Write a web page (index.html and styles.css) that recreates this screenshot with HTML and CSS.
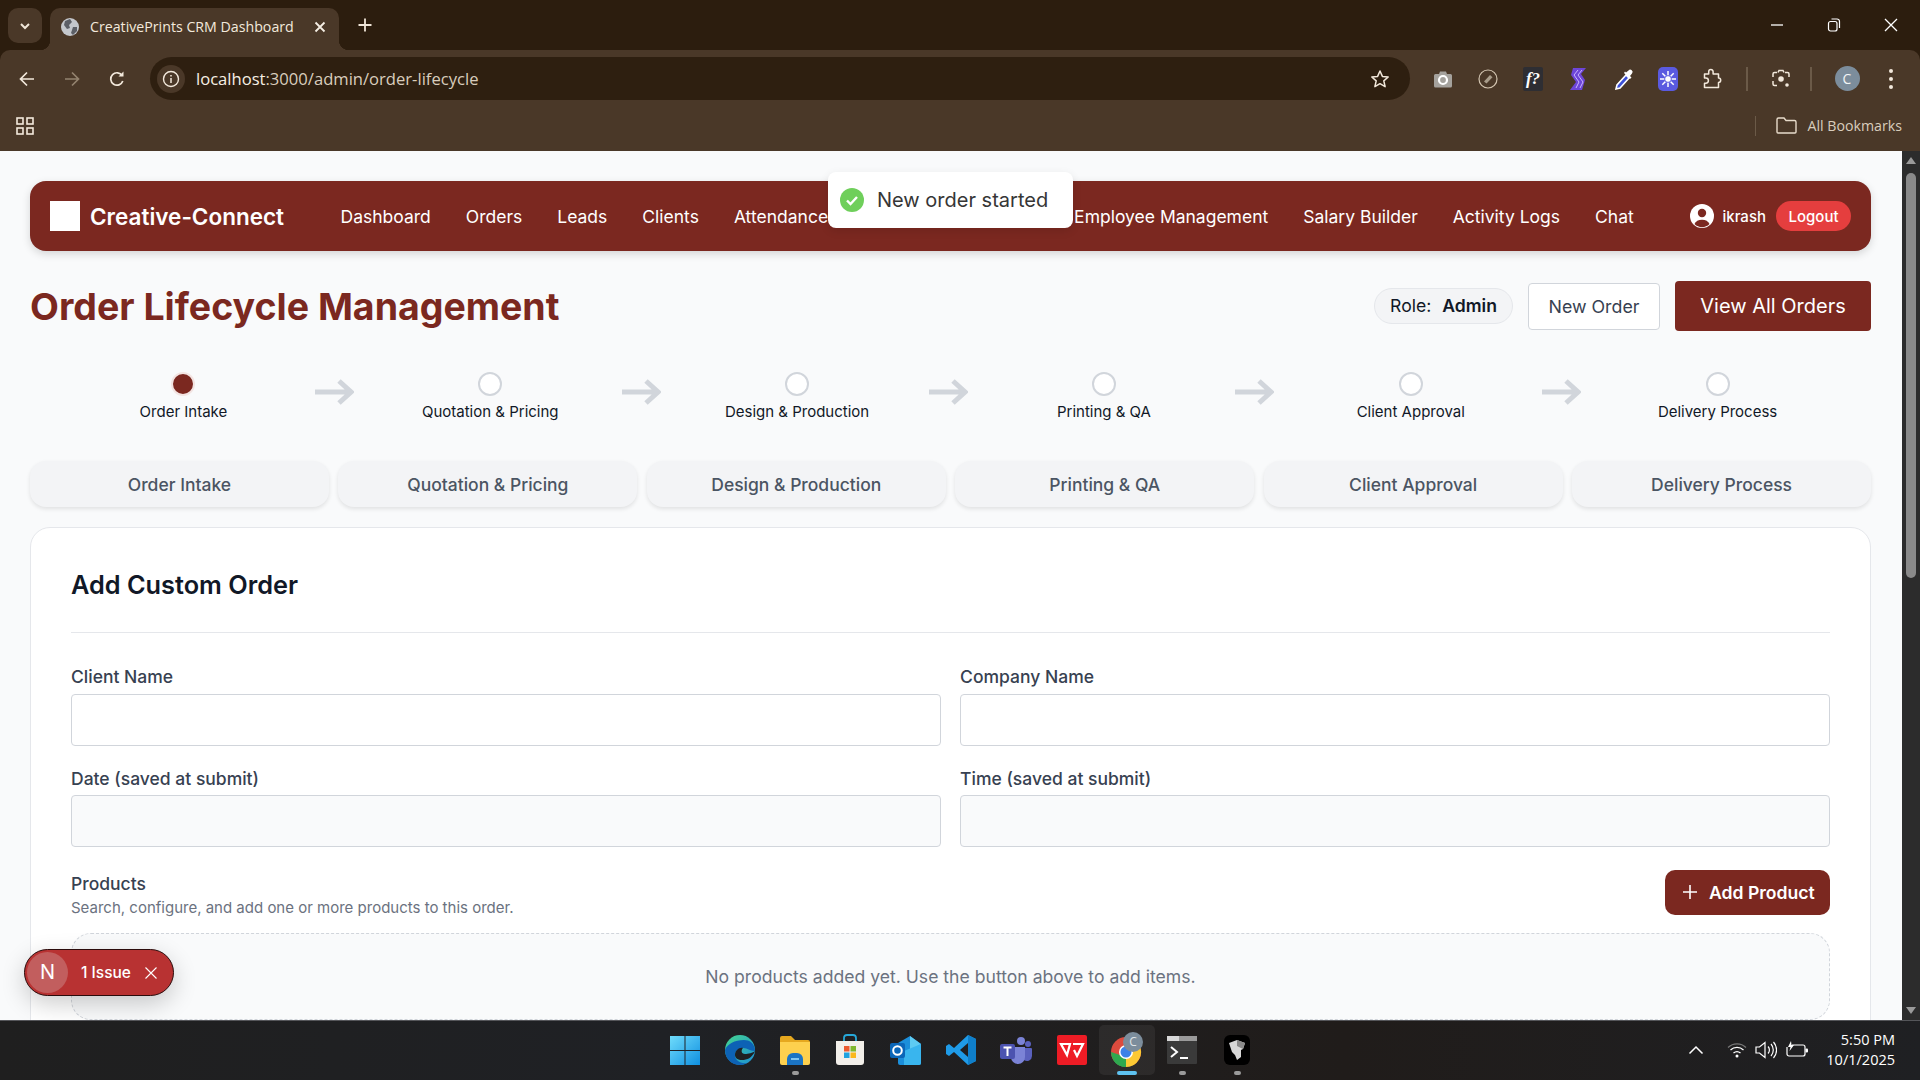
FILE: index.html
```html
<!DOCTYPE html>
<html lang="en">
<head>
  <meta charset="UTF-8" />
  <title>CreativePrints CRM Dashboard</title>
  <link rel="stylesheet" href="styles.css">
</head>
<body>

<!-- Browser chrome -->
<header class="browser">
  <div class="tabstrip">
    <div class="tab-search">
      <svg width="14" height="14" viewBox="0 0 14 14"><path d="M3 5l4 4 4-4" fill="none" stroke="#f0e6d8" stroke-width="2"/></svg>
    </div>
    <div class="tab">
      <svg class="tab-globe" width="18" height="18" viewBox="0 0 18 18"><circle cx="9" cy="9" r="9" fill="#c4c7cc"/><path d="M4 3l5-2 2 3-3 3 1 3-3 1-3-4zM12 9l4 0 0 4-4 4-2-2z" fill="#5c5f66"/></svg>
      <span class="tab-title">CreativePrints CRM Dashboard</span>
      <svg class="tab-close" width="12" height="12" viewBox="0 0 12 12"><path d="M1.5 1.5l9 9M10.500 1.500l-9 9" stroke="#f5eee4" stroke-width="1.800"/></svg>
    </div>
    <svg class="tab-new" width="16" height="16" viewBox="0 0 16 16"><path d="M8 1.500v13M1.500 8h13" stroke="#f0e6d8" stroke-width="1.800"/></svg>
    <div class="win-controls">
      <svg width="14" height="14" viewBox="0 0 14 14"><path d="M1 7h12" stroke="#fff" stroke-width="1.300"/></svg>
      <svg width="14" height="14" viewBox="0 0 14 14"><rect x="1.500" y="3.500" width="8.500" height="9.500" rx="2" fill="none" stroke="#fff" stroke-width="1.200"/><path d="M4.500 1h5.500a2.500 2.500 0 0 1 2.500 2.500v6.500" fill="none" stroke="#fff" stroke-width="1.200"/></svg>
      <svg width="14" height="14" viewBox="0 0 14 14"><path d="M1 1l12 12M13 1L1 13" stroke="#fff" stroke-width="1.300"/></svg>
    </div>
  </div>

  <div class="toolbar">
    <div class="tool-slot">
      <svg width="18" height="18" viewBox="0 0 18 18"><path d="M16 9H3M9 2.500L2.500 9 9 15.500" fill="none" stroke="#f3e9dc" stroke-width="1.700"/></svg>
    </div>
    <div class="tool-slot">
      <svg width="18" height="18" viewBox="0 0 18 18"><path d="M2 9h13M9 2.500L15.500 9 9 15.500" fill="none" stroke="#93836f" stroke-width="1.700"/></svg>
    </div>
    <div class="tool-slot">
      <svg width="18" height="18" viewBox="0 0 18 18"><path d="M14.800 11a6.200 6.200 0 1 1-.6-5.300" fill="none" stroke="#f3e9dc" stroke-width="1.700"/><path d="M15.500 1.500v5h-5z" fill="#f3e9dc"/></svg>
    </div>
    <div class="omnibox">
      <span class="omni-info">
        <svg width="18" height="18" viewBox="0 0 18 18"><circle cx="9" cy="9" r="7.500" fill="none" stroke="#f3e9dc" stroke-width="1.400"/><path d="M9 8v5M9 5v1.600" stroke="#f3e9dc" stroke-width="1.500"/></svg>
      </span>
      <span class="omni-url">localhost<span class="omni-path">:3000/admin/order-lifecycle</span></span>
      <svg class="omni-star" width="20" height="20" viewBox="0 0 20 20"><path d="M10 2l2.400 5.400 5.800.6-4.400 3.900 1.300 5.800L10 14.700l-5.100 3 1.300-5.800L1.800 8l5.800-.6z" fill="none" stroke="#f3e9dc" stroke-width="1.500" stroke-linejoin="round"/></svg>
    </div>
    <div class="extensions">
      <div class="tool-slot">
        <svg width="20" height="20" viewBox="0 0 20 20"><path d="M1 6.500a1.500 1.500 0 0 1 1.500-1.500H6l1-2.500h6l1 2.500h3.500A1.500 1.500 0 0 1 19 6.500V17a1.500 1.500 0 0 1-1.500 1.500h-15A1.500 1.500 0 0 1 1 17z" fill="#a5a29d"/><circle cx="10" cy="11" r="4" fill="none" stroke="#fff" stroke-width="2.200"/></svg>
      </div>
      <div class="tool-slot">
        <svg width="20" height="20" viewBox="0 0 20 20"><circle cx="10" cy="10" r="9" fill="none" stroke="#d2c4b0" stroke-width="1.200"/><path d="M6 12.500l6-6.500 2.500 2.200-6 6.300z" fill="#a89c8a"/></svg>
      </div>
      <div class="tool-slot">
        <div class="ext-formula">f?</div>
      </div>
      <div class="tool-slot">
        <svg width="18" height="24" viewBox="0 0 18 24"><path d="M4 1h13l-5 6 4 6-3 10H1l6-8-5-7z" fill="#6d45d8"/><path d="M9 3L5 8l5 7-3 6M13 3L9 8l5 7-3 6" fill="none" stroke="#c9b4ff" stroke-width="1"/></svg>
      </div>
      <div class="tool-slot">
        <svg width="22" height="24" viewBox="0 0 22 24"><path d="M14 8L5 18l-1 4 4-1 9-10z" fill="#3c50d8" stroke="#fff" stroke-width="1.600"/><path d="M12 6l6 6 1.500-1.500-1.500-1.500 2-2.500a2.200 2.200 0 0 0-3.500-3l-2.500 2-1-1z" fill="#fff"/></svg>
      </div>
      <div class="tool-slot">
        <div class="ext-blue">
          <svg width="16" height="16" viewBox="0 0 16 16"><g stroke="#fff" stroke-width="1.500"><path d="M8 0v16M0 8h16M2.300 2.300l11.400 11.400M13.700 2.300L2.300 13.700"/></g><circle cx="8" cy="8" r="3.400" fill="#fff" stroke="#5a5ae0"/></svg>
        </div>
      </div>
      <div class="tool-slot">
        <svg width="20" height="21" viewBox="0 0 20 21"><path d="M1.500 6h4.200V3.700a2.200 2.200 0 0 1 4.400 0V6h5.400v4a2.200 2.200 0 0 1 0 4.400v5H1.500v-4.200h1.300a2.600 2.600 0 0 0 0-5.200H1.500z" fill="none" stroke="#f3e9dc" stroke-width="1.500" stroke-linejoin="round"/></svg>
      </div>
      <span class="tool-sep"></span>
      <div class="tool-lens">
        <svg width="20" height="20" viewBox="0 0 20 20"><path d="M6 3.500H3.500A1.500 1.500 0 0 0 2 5v3M14 3.500h2.500A1.500 1.500 0 0 1 18 5v3M2 12v3a1.500 1.500 0 0 0 1.500 1.500H6" fill="none" stroke="#f3e9dc" stroke-width="1.500"/><path d="M7 3.500l1-2h4l1 2" fill="none" stroke="#f3e9dc" stroke-width="1.500"/><circle cx="10" cy="10" r="2.800" fill="#f3e9dc"/><circle cx="16" cy="16" r="1.800" fill="#f3e9dc"/></svg>
      </div>
      <span class="tool-sep tool-sep-2"></span>
      <div class="avatar">C</div>
      <div class="tool-dots"><i></i><i></i><i></i></div>
    </div>
  </div>

  <div class="bookmarks">
    <svg class="apps-icon" width="18" height="18" viewBox="0 0 18 18"><g fill="none" stroke="#f3e9dc" stroke-width="1.600"><rect x="1" y="1" width="6" height="6"/><rect x="11" y="1" width="6" height="6"/><rect x="1" y="11" width="6" height="6"/><rect x="11" y="11" width="6" height="6"/></g></svg>
    <span class="bm-sep"></span>
    <svg width="21" height="17" viewBox="0 0 21 17"><path d="M1 2.500A1.500 1.500 0 0 1 2.500 1H8l2 2.500h8.500A1.500 1.500 0 0 1 20 5v10a1 1 0 0 1-1 1H2a1 1 0 0 1-1-1z" fill="none" stroke="#e8dccb" stroke-width="1.400"/></svg>
    <span class="bm-label">All Bookmarks</span>
  </div>
</header>

<!-- Contenu de la page -->
<div class="viewport">
  <main class="page">
    <nav class="navbar">
      <div class="brand">
        <span class="brand-logo"></span>
        <span class="brand-name">Creative-Connect</span>
      </div>
      <div class="nav-links">
        <a>Dashboard</a>
        <a>Orders</a>
        <a>Leads</a>
        <a>Clients</a>
        <a>Attendance</a>
        <span class="nav-covered"></span>
        <a>Employee Management</a>
        <a>Salary Builder</a>
        <a>Activity Logs</a>
        <a>Chat</a>
      </div>
      <div class="nav-user">
        <svg width="24" height="24" viewBox="0 0 24 24"><circle cx="12" cy="12" r="12" fill="#fff"/><circle cx="12" cy="9" r="4.200" fill="#7b2820"/><path d="M4.500 20a8 6.500 0 0 1 15 0 10.500 10.500 0 0 1-15 0z" fill="#7b2820"/></svg>
        <span class="nav-username">ikrash</span>
        <button class="logout-btn">Logout</button>
      </div>
    </nav>

    <div class="title-row">
      <h1>Order Lifecycle Management</h1>
      <div class="title-actions">
        <span class="role-pill">Role: <b>Admin</b></span>
        <button class="btn-outline">New Order</button>
        <button class="btn-solid">View All Orders</button>
      </div>
    </div>

    <div class="stepper">
      <div class="step active"><span class="step-dot"></span><span>Order Intake</span><svg class="step-arrow" width="40" height="26" viewBox="0 0 40 26"><path d="M1 13h35M25 2l12 11-12 11" fill="none" stroke="#d1d5db" stroke-width="5"/></svg></div>
      <div class="step"><span class="step-dot"></span><span>Quotation &amp; Pricing</span><svg class="step-arrow" width="40" height="26" viewBox="0 0 40 26"><path d="M1 13h35M25 2l12 11-12 11" fill="none" stroke="#d1d5db" stroke-width="5"/></svg></div>
      <div class="step"><span class="step-dot"></span><span>Design &amp; Production</span><svg class="step-arrow" width="40" height="26" viewBox="0 0 40 26"><path d="M1 13h35M25 2l12 11-12 11" fill="none" stroke="#d1d5db" stroke-width="5"/></svg></div>
      <div class="step"><span class="step-dot"></span><span>Printing &amp; QA</span><svg class="step-arrow" width="40" height="26" viewBox="0 0 40 26"><path d="M1 13h35M25 2l12 11-12 11" fill="none" stroke="#d1d5db" stroke-width="5"/></svg></div>
      <div class="step"><span class="step-dot"></span><span>Client Approval</span><svg class="step-arrow" width="40" height="26" viewBox="0 0 40 26"><path d="M1 13h35M25 2l12 11-12 11" fill="none" stroke="#d1d5db" stroke-width="5"/></svg></div>
      <div class="step"><span class="step-dot"></span><span>Delivery Process</span></div>
    </div>

    <div class="tabs">
      <button>Order Intake</button>
      <button>Quotation &amp; Pricing</button>
      <button>Design &amp; Production</button>
      <button>Printing &amp; QA</button>
      <button>Client Approval</button>
      <button>Delivery Process</button>
    </div>

    <section class="card">
      <h2>Add Custom Order</h2>
      <div class="form-grid">
        <div class="field">
          <label>Client Name</label>
          <input type="text" />
        </div>
        <div class="field">
          <label>Company Name</label>
          <input type="text" />
        </div>
        <div class="field">
          <label>Date (saved at submit)</label>
          <input class="readonly" type="text" readonly />
        </div>
        <div class="field">
          <label>Time (saved at submit)</label>
          <input class="readonly" type="text" readonly />
        </div>
      </div>
      <div class="products-head">
        <div class="products-text">
          <div class="products-title">Products</div>
          <div class="products-sub">Search, configure, and add one or more products to this order.</div>
        </div>
        <button class="add-product">
          <svg width="16" height="16" viewBox="0 0 16 16"><path d="M8 1v14M1 8h14" stroke="#fff" stroke-width="1.600"/></svg>
          Add Product
        </button>
      </div>
      <div class="products-empty">No products added yet. Use the button above to add items.</div>
    </section>
  </main>

  <div class="scrollbar">
    <i class="sb-up"></i>
    <div class="sb-track"><div class="sb-thumb"></div></div>
    <i class="sb-down"></i>
  </div>

  <!-- Toast et badge par-dessus la page -->
  <div class="toast">
    <svg width="24" height="24" viewBox="0 0 24 24"><circle cx="12" cy="12" r="12" fill="#6fcf5b"/><path d="M7 12.500l3.500 3.500L17 9" fill="none" stroke="#fff" stroke-width="2.400"/></svg>
    <span>New order started</span>
  </div>
  <div class="issue-badge">
    <span class="issue-n">N</span>
    <span class="issue-text">1 Issue</span>
    <svg width="12" height="12" viewBox="0 0 12 12"><path d="M.5.500l11 11M11.500.500l-11 11" stroke="#fff" stroke-width="1.100"/></svg>
  </div>
</div>

<!-- Barre des taches -->
<footer class="taskbar">
  <div class="task-spacer"></div>
  <div class="task-icons">
    <div class="task-icon">
      <svg width="30" height="30" viewBox="0 0 30 30"><defs><linearGradient id="win" x1="0" y1="0" x2="1" y2="1"><stop offset="0" stop-color="#6fdcfb"/><stop offset="1" stop-color="#0f8fe0"/></linearGradient></defs><path d="M0 1h14.500v14H0zM15.500 1H30v14H15.500zM0 16h14.500v14H0zM15.500 16H30v14H15.500z" fill="url(#win)"/></svg>
    </div>
    <div class="task-icon">
      <svg width="30" height="30" viewBox="0 0 30 30"><defs><linearGradient id="edge" x1="0" y1="0" x2="1" y2="1"><stop offset="0" stop-color="#45d68f"/><stop offset="1" stop-color="#1c8fd8"/></linearGradient></defs><circle cx="15" cy="15" r="15" fill="url(#edge)"/><path d="M30 16c0-8-6-11-11-11C10 5 2 9 0 15c0 9 7 15 15 15 3 0 5-1 7-2-7 1-12-3-12-8 0-4 4-7 8-7 5 0 6 3 12 3z" fill="#0d62b5"/><path d="M10 20c0 3 3 5 7 5 5 0 10-2 13-9-2 2-7 3-10 3-4 0-4-4-2-6-4-1-8 3-8 7z" fill="#1f2023"/></svg>
    </div>
    <div class="task-icon has-dot">
      <svg width="32" height="30" viewBox="0 0 32 30"><path d="M1 3a2 2 0 0 1 2-2h9l4 4h13a2 2 0 0 1 2 2v3H1z" fill="#e6a81f"/><path d="M1 7h30v21a2 2 0 0 1-2 2H3a2 2 0 0 1-2-2z" fill="#fdd04e"/><path d="M8 24a6 6 0 0 1 6-6h4a6 6 0 0 1 6 6v6H8z" fill="#1b74c4"/><rect x="12" y="23" width="8" height="2" fill="#7fc4f0"/></svg>
    </div>
    <div class="task-icon">
      <svg width="30" height="32" viewBox="0 0 30 32"><path d="M9 8V4a3 3 0 0 1 3-3h6a3 3 0 0 1 3 3v4" fill="none" stroke="#26a7d8" stroke-width="1.800"/><path d="M1 7h28v21a3 3 0 0 1-3 3H4a3 3 0 0 1-3-3z" fill="#f2efea"/><rect x="9" y="12" width="5.500" height="5.500" fill="#ea5a30"/><rect x="15.500" y="12" width="5.500" height="5.500" fill="#7fb72e"/><rect x="9" y="18.500" width="5.500" height="5.500" fill="#1fa2e0"/><rect x="15.500" y="18.500" width="5.500" height="5.500" fill="#fbb81d"/></svg>
    </div>
    <div class="task-icon">
      <svg width="32" height="30" viewBox="0 0 32 30"><path d="M8 8l12-7 11 8v19a2 2 0 0 1-2 2H10a2 2 0 0 1-2-2z" fill="#1b8fdb"/><path d="M20 1l11 8-11 7z" fill="#5ecbf2"/><path d="M14 16l17-7v19a2 2 0 0 1-2 2H14z" fill="#39b5ee"/><rect x="0" y="8" width="15" height="15" rx="2" fill="#0b66b8"/><circle cx="7.500" cy="15.500" r="4.300" fill="none" stroke="#fff" stroke-width="2"/></svg>
    </div>
    <div class="task-icon">
      <svg width="30" height="32" viewBox="0 0 30 32"><path d="M22 1l8 4v22l-8 4L8 18l-5 4-3-2v-8l3-2 5 4z" fill="#1f9be8"/><path d="M22 1l8 4v22l-8 4z" fill="#0f7fca"/><path d="M22 9l-8 7 8 7z" fill="#1f2023"/></svg>
    </div>
    <div class="task-icon">
      <svg width="32" height="28" viewBox="0 0 32 28"><circle cx="21" cy="5" r="4" fill="#7b83d6"/><circle cx="28" cy="8" r="3" fill="#5a61bd"/><path d="M24 12h7a1 1 0 0 1 1 1v7a5 5 0 0 1-8 4z" fill="#5a61bd"/><path d="M11 11h14v10a7 7 0 0 1-14 0z" fill="#7b83d6"/><rect x="0" y="8" width="15" height="15" rx="2" fill="#4c53b0"/><path d="M3.500 11.500h8M7.500 11.500v8.500" stroke="#fff" stroke-width="2"/></svg>
    </div>
    <div class="task-icon">
      <svg width="30" height="30" viewBox="0 0 30 30"><rect width="30" height="30" rx="2" fill="#ee1c25"/><path d="M4 9h9l-3 11zM16 9h10l-6 12-3-6" fill="none" stroke="#fff" stroke-width="2.200"/></svg>
    </div>
    <div class="task-icon task-active">
      <svg width="32" height="36" viewBox="0 0 32 36"><circle cx="15" cy="20" r="15" fill="#dd4b3e"/><path d="M15 20L2 27.500A15 15 0 0 0 15 35l7.500-2z" fill="#2fa84f"/><path d="M15 20l13-7.500A15 15 0 0 1 15 35z" fill="#fcc934"/><path d="M2 27.500A15 15 0 0 1 0 20l9 3 6 12A15 15 0 0 1 2 27.500z" fill="#2fa84f"/><circle cx="15" cy="20" r="7" fill="#fff"/><circle cx="15" cy="20" r="5.500" fill="#3b82e8"/><circle cx="22" cy="10" r="10" fill="#7c8d9c"/><text x="22" y="14" class="chrome-badge">C</text></svg>
      <span class="task-bar"></span>
    </div>
    <div class="task-icon has-dot">
      <svg width="30" height="28" viewBox="0 0 30 28"><rect width="30" height="28" rx="1" fill="#3a3a3a"/><rect width="30" height="5" fill="#9a9a9a"/><rect width="12" height="5" fill="#d8d8d8"/><path d="M4 11l6 5-6 5" fill="none" stroke="#fff" stroke-width="2"/><path d="M13 22h8" stroke="#fff" stroke-width="2"/></svg>
    </div>
    <div class="task-icon has-dot">
      <svg width="26" height="30" viewBox="0 0 26 30"><rect width="26" height="30" rx="6" fill="#000"/><path d="M5 8l8-3 8 3-2 6-2 1v7l-4 3-2-5-3-3z" fill="#d8d8d8"/><path d="M13 5l8 3-2 6-6-3z" fill="#8a8a8a"/></svg>
    </div>
  </div>
  <div class="tray">
    <svg width="16" height="10" viewBox="0 0 16 10"><path d="M1.500 8.500L8 2l6.500 6.500" fill="none" stroke="#fff" stroke-width="1.500"/></svg>
    <svg class="tray-wifi" width="20" height="16" viewBox="0 0 20 16"><path d="M1 5.500a13 13 0 0 1 18 0" fill="none" stroke="#777" stroke-width="1.200"/><path d="M3.500 8a9.500 9.500 0 0 1 13 0M6.500 11a5.500 5.500 0 0 1 7 0" fill="none" stroke="#fff" stroke-width="1.300"/><circle cx="10" cy="14" r="1.500" fill="#fff"/></svg>
    <svg width="22" height="18" viewBox="0 0 22 18"><path d="M1 6h3.500L10 1.500v15L4.500 12H1z" fill="none" stroke="#fff" stroke-width="1.200"/><path d="M13 5.500a5 5 0 0 1 0 7M16 3a9 9 0 0 1 0 12M18.500 1a12 12 0 0 1 0 16" fill="none" stroke="#fff" stroke-width="1.200"/></svg>
    <svg width="22" height="18" viewBox="0 0 22 18"><path d="M6 4h11a2 2 0 0 1 2 2v7a2 2 0 0 1-2 2H3a2 2 0 0 1-2-2V6" fill="none" stroke="#fff" stroke-width="1.200"/><rect x="19.500" y="7.500" width="2.500" height="4" rx="1" fill="#fff"/><path d="M5 0L2 6h2.500L3.500 10 8 4H5.500z" fill="#fff"/></svg>
    <div class="clock"><div>5:50 PM</div><div>10/1/2025</div></div>
  </div>
</footer>

</body>
</html>
```

FILE: styles.css
```css
* {
  box-sizing: border-box;
}

html, body {
  margin: 0;
  height: 100%;
}

body {
  width: 1920px;
  height: 1080px;
  overflow: hidden;
  display: flex;
  flex-direction: column;
  background: #f9fafb;
  font-family: 'Inter', 'Liberation Sans', sans-serif;
  color: #111827;
}

svg {
  display: block;
  flex: none;
}

/* Browser chrome */
.browser {
  height: 151px;
  flex: none;
  background: #2c1d0e;
  font-family: 'Open Sans', 'Noto Sans', sans-serif;
  color: #f3e9dc;
}

.tabstrip {
  height: 50px;
  display: flex;
  align-items: flex-end;
  padding-left: 8px;
}

.tab-search {
  width: 34px;
  height: 35px;
  margin-bottom: 7px;
  border-radius: 10px;
  background: #4a3828;
  display: flex;
  align-items: center;
  justify-content: center;
}

.tab {
  position: relative;
  width: 289px;
  height: 42px;
  margin-left: 8px;
  padding: 0 13px 5px 10px;
  border-radius: 10px 10px 0 0;
  background: #4a3828;
  display: flex;
  align-items: center;
}

.tab::before, .tab::after {
  content: "";
  position: absolute;
  bottom: 0;
  width: 10px;
  height: 10px;
}

.tab::before {
  left: -10px;
  background: radial-gradient(circle at 0 0, transparent 10px, #4a3828 10.500px);
}

.tab::after {
  right: -10px;
  background: radial-gradient(circle at 100% 0, transparent 10px, #4a3828 10.500px);
}

.tab-globe {
  margin-left: 1px;
}

.tab-title {
  margin-left: 11px;
  font-size: 14.200px;
  white-space: nowrap;
  flex: 1;
}

.tab-new {
  margin: 0 0 17px 18px;
}

.win-controls {
  margin-left: auto;
  height: 50px;
  width: 150px;
  padding-right: 22px;
  display: flex;
  align-items: center;
  justify-content: space-between;
}

.toolbar {
  height: 57px;
  position: relative;
  padding: 0 0 0 4.500px;
  border-radius: 10px 10px 0 0;
  background: #4a3828;
  display: flex;
  align-items: center;
}

.tool-slot {
  width: 45px;
  height: 45px;
  flex: none;
  display: flex;
  align-items: center;
  justify-content: center;
}

.omnibox {
  width: 1260px;
  height: 43px;
  margin-left: 10.500px;
  padding: 0 20px 0 7px;
  border-radius: 22px;
  background: #2e1f10;
  display: flex;
  align-items: center;
}

.omni-info {
  width: 28px;
  height: 28px;
  border-radius: 50%;
  background: #4a3828;
  display: flex;
  align-items: center;
  justify-content: center;
}

.omni-url {
  margin-left: 11px;
  font-size: 16.600px;
  color: #f7efe4;
  flex: 1;
}

.omni-path {
  color: #d9cdbd;
}

.extensions {
  display: flex;
  align-items: center;
  margin-left: 10.500px;
}

.ext-formula {
  width: 20px;
  height: 24px;
  background: #2e2e33;
  border-radius: 2px;
  color: #fff;
  font-family: 'Liberation Serif', serif;
  font-style: italic;
  font-size: 17px;
  font-weight: 700;
  text-align: center;
  line-height: 24px;
}

.ext-blue {
  width: 20px;
  height: 24px;
  border-radius: 5px;
  background: #5a5ae0;
  display: flex;
  align-items: center;
  justify-content: center;
}

.tool-sep {
  width: 2px;
  height: 24px;
  margin-left: 10px;
  background: #6b5a48;
}

.tool-lens {
  width: 20px;
  margin-left: 23px;
}

.tool-sep-2 {
  margin-left: 19px;
}

.avatar {
  width: 25px;
  height: 25px;
  margin-left: 23px;
  border-radius: 50%;
  background: #7c8d9c;
  color: #f2f4f6;
  font-size: 14px;
  line-height: 25px;
  text-align: center;
}

.tool-dots {
  margin-left: 29px;
  display: flex;
  flex-direction: column;
  gap: 4px;
}

.tool-dots i {
  width: 4px;
  height: 4px;
  border-radius: 50%;
  background: #f3e9dc;
}

.bookmarks {
  height: 44px;
  padding: 0 18px 7px 16px;
  background: #4a3828;
  display: flex;
  align-items: center;
}

.bm-sep {
  width: 1px;
  height: 20px;
  margin-left: auto;
  margin-right: 20px;
  background: #6b5a48;
}

.bm-label {
  margin-left: 10px;
  font-size: 14.200px;
  color: #d9cdbd;
}

/* Page */
.viewport {
  position: relative;
  height: 869px;
  flex: none;
  display: flex;
  overflow: hidden;
}

.page {
  width: 1902px;
  padding: 30px 31px 0 30px;
  background: #f9fafb;
  overflow: hidden;
}

.navbar {
  height: 70px;
  padding: 0 20px;
  border-radius: 16px;
  background: #7b2820;
  box-shadow: 0 3px 8px rgba(0, 0, 0, 0.15);
  color: #fff;
  display: flex;
  align-items: center;
}

.brand {
  display: flex;
  align-items: center;
  gap: 10px;
}

.brand-logo {
  width: 30px;
  height: 30px;
  background: #fff;
}

.brand-name {
  font-size: 22.500px;
  font-weight: 600;
  white-space: nowrap;
}

.nav-links {
  margin-left: 56.500px;
  display: flex;
  gap: 35px;
  font-size: 17.500px;
  white-space: nowrap;
}

.nav-covered {
  width: 176px;
}

.nav-user {
  margin-left: auto;
  display: flex;
  align-items: center;
  gap: 8px;
}

.nav-username {
  font-size: 15px;
  font-weight: 500;
}

.logout-btn {
  height: 30px;
  width: 75px;
  margin-left: 2px;
  padding: 0;
  border: none;
  border-radius: 15px;
  background: #e53e3e;
  color: #fff;
  font: 500 15px 'Inter', sans-serif;
}

.title-row {
  height: 50px;
  margin-top: 30px;
  display: flex;
  align-items: center;
  justify-content: space-between;
}

h1 {
  margin: 0;
  font-size: 37.500px;
  font-weight: 700;
  color: #7b2820;
}

.title-actions {
  display: flex;
  align-items: center;
}

.role-pill {
  height: 36px;
  padding: 0 15px;
  border: 1px solid #e5e7eb;
  border-radius: 18px;
  background: #f3f4f6;
  font-size: 17.600px;
  line-height: 34px;
  white-space: pre;
}

.role-pill b {
  margin-left: 6px;
  font-weight: 600;
}

.btn-outline {
  width: 132px;
  height: 47px;
  margin-left: 15px;
  border: 1px solid #d1d5db;
  border-radius: 4px;
  background: #fff;
  color: #374151;
  font: 400 17.800px 'Inter', sans-serif;
}

.btn-solid {
  width: 196px;
  height: 50px;
  margin-left: 15px;
  border: none;
  border-radius: 4px;
  background: #7b2820;
  color: #fff;
  font: 400 20px 'Inter', sans-serif;
}

.stepper {
  margin-top: 41px;
  display: grid;
  grid-template-columns: repeat(6, 1fr);
}

.step {
  position: relative;
  display: flex;
  flex-direction: column;
  align-items: center;
  gap: 6px;
  font-size: 15px;
  line-height: 20px;
}

.step-dot {
  width: 24px;
  height: 24px;
  border: 2px solid #d1d5db;
  border-radius: 50%;
  background: #fff;
}

.step.active .step-dot {
  background: #7b2820;
  border-color: #f3e4e2;
  box-shadow: inset 0 0 0 1px #7b2820;
}

.step-arrow {
  position: absolute;
  right: -17px;
  top: 7px;
}

.tabs {
  margin-top: 39px;
  display: grid;
  grid-template-columns: repeat(6, 1fr);
  gap: 9.600px;
}

.tabs button {
  height: 46px;
  border: none;
  border-radius: 16px;
  background: #f3f4f6;
  box-shadow: 0 2px 4px rgba(0, 0, 0, 0.1);
  color: #4b5563;
  font: 500 17.500px 'Inter', sans-serif;
}

.card {
  margin-top: 20px;
  padding: 40px 40px 0;
  height: 520px;
  border: 1px solid #e5e7eb;
  border-radius: 20px;
  background: #fff;
}

h2 {
  margin: 0;
  padding-bottom: 30px;
  border-bottom: 1px solid #e5e7eb;
  font-size: 25.300px;
  line-height: 34px;
  font-weight: 600;
}

.form-grid {
  margin-top: 33px;
  display: grid;
  grid-template-columns: 1fr 1fr;
  gap: 22.300px 19.200px;
}

.field label {
  display: block;
  margin-bottom: 5.500px;
  font-size: 17.500px;
  line-height: 22px;
  font-weight: 500;
  color: #374151;
}

.field input {
  display: block;
  width: 100%;
  height: 52px;
  border: 1px solid #d1d5db;
  border-radius: 4px;
  background: #fff;
}

.field input.readonly {
  background: #f9fafb;
}

.products-head {
  margin-top: 22.500px;
  height: 45px;
  display: flex;
  justify-content: space-between;
  align-items: center;
}

.products-text {
  margin-top: 6px;
}

.products-title {
  font-size: 17.500px;
  line-height: 24px;
  font-weight: 500;
  color: #374151;
}

.products-sub {
  font-size: 15px;
  line-height: 23px;
  color: #6b7280;
}

.add-product {
  width: 165px;
  height: 45px;
  padding: 0 0 0 17px;
  border: none;
  border-radius: 10px;
  background: #7b2820;
  color: #fff;
  font: 600 17.600px 'Inter', sans-serif;
  display: flex;
  align-items: center;
  gap: 11px;
}

.products-empty {
  margin-top: 18px;
  height: 87px;
  border: 1px dashed #d1d5db;
  border-radius: 20px;
  background: #f9fafb;
  color: #6b7280;
  font-size: 17.600px;
  display: flex;
  align-items: center;
  justify-content: center;
}

/* Scrollbar */
.scrollbar {
  width: 18px;
  background: #2c2c2c;
  display: flex;
  flex-direction: column;
  align-items: center;
}

.sb-up, .sb-down {
  width: 0;
  height: 0;
  margin: 6px 0;
  border-left: 5px solid transparent;
  border-right: 5px solid transparent;
}

.sb-up {
  border-bottom: 7px solid #9a9a9a;
}

.sb-down {
  border-top: 7px solid #9a9a9a;
}

.sb-track {
  flex: 1;
  width: 100%;
  display: flex;
  justify-content: center;
}

.sb-thumb {
  width: 10px;
  height: 405px;
  margin-top: 3px;
  border-radius: 5px;
  background: #8a8a8a;
}

/* Overlays */
.toast {
  position: absolute;
  left: 828px;
  top: 21px;
  width: 245px;
  height: 56px;
  padding-left: 12px;
  border-radius: 8px;
  background: #fff;
  box-shadow: 0 3px 10px rgba(0, 0, 0, 0.1);
  color: #363636;
  font-size: 20px;
  display: flex;
  align-items: center;
  gap: 13px;
}

.issue-badge {
  position: absolute;
  left: 24px;
  top: 798px;
  width: 150px;
  height: 47px;
  border: 1px solid #2b0b0b;
  border-radius: 24px;
  background: #b83232;
  box-shadow: 0 8px 24px rgba(0, 0, 0, 0.2);
  color: #fff;
  display: flex;
  align-items: center;
}

.issue-n {
  width: 41px;
  height: 41px;
  margin-left: 2px;
  border-radius: 50%;
  background: #c25e5e;
  font-size: 20px;
  line-height: 41px;
  text-align: center;
}

.issue-text {
  margin-left: 13px;
  margin-right: 14px;
  font-size: 15.500px;
  font-weight: 500;
}

/* Taskbar */
.taskbar {
  height: 60px;
  flex: none;
  padding-bottom: 2px;
  display: grid;
  grid-template-columns: 1fr auto 1fr;
  align-items: center;
  background: linear-gradient(to right, #1f1f1f, #1f2125 35%, #201c1a 70%, #1f2023);
  border-top: 1px solid #55565a;
}

.task-icons {
  margin-left: 2px;
  display: flex;
  justify-content: center;
}

.task-icon {
  position: relative;
  width: 55.300px;
  height: 50px;
  display: flex;
  align-items: center;
  justify-content: center;
}

.task-icon.has-dot::after {
  content: "";
  position: absolute;
  left: 50%;
  bottom: 0;
  width: 7px;
  height: 4px;
  margin-left: -3.500px;
  border-radius: 2px;
  background: #9a9a9a;
}

.task-active {
  border-radius: 5px;
  background: rgba(255, 255, 255, 0.06);
}

.task-bar {
  position: absolute;
  left: 50%;
  bottom: 0;
  width: 20px;
  height: 4px;
  margin-left: -10px;
  border-radius: 2px;
  background: #5ec2f0;
}

.chrome-badge {
  fill: #dfe4e8;
  font-family: 'Open Sans', sans-serif;
  font-size: 12px;
  text-anchor: middle;
}

.tray {
  display: flex;
  align-items: center;
  justify-content: flex-end;
  padding-right: 25px;
  gap: 8.500px;
  color: #fff;
}

.tray-wifi {
  margin-left: 14px;
}

.clock {
  margin-left: 10px;
  font-family: 'Open Sans', 'Noto Sans', sans-serif;
  font-size: 14.500px;
  line-height: 20px;
  text-align: right;
}
```
